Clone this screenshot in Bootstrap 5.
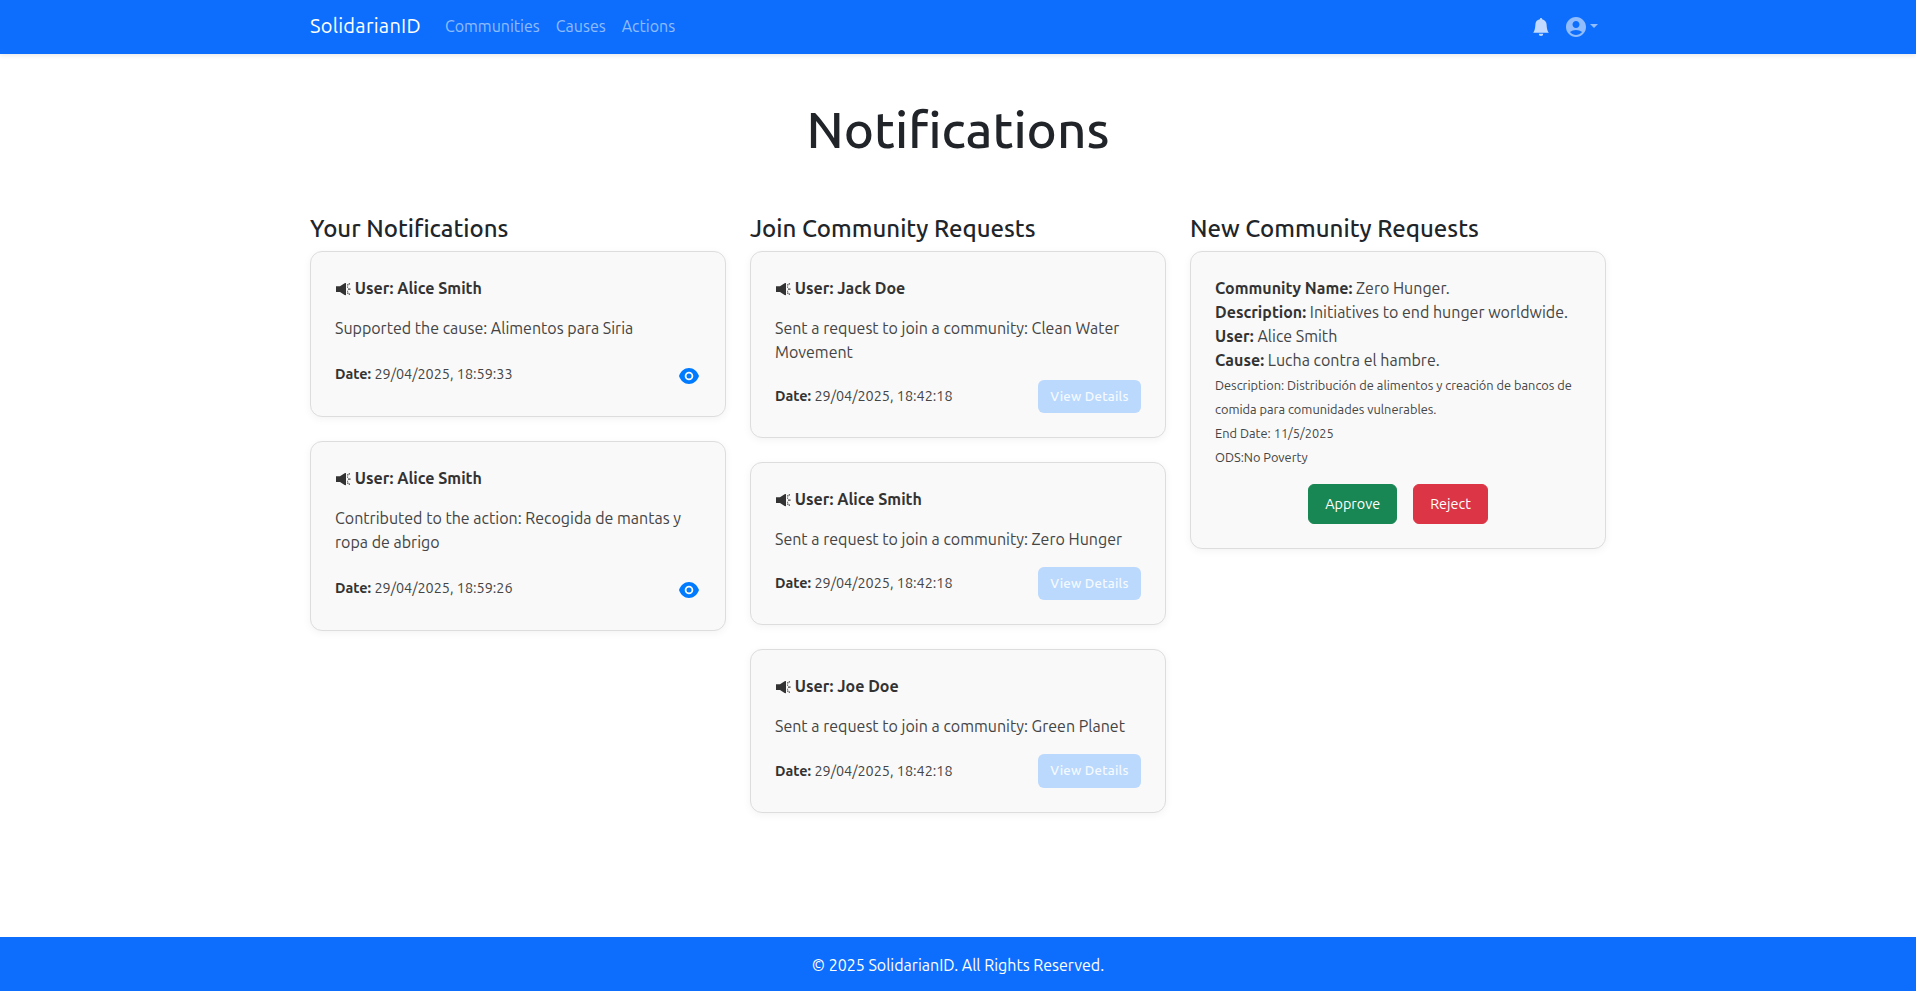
<!DOCTYPE html>
<html lang="en">
<head>
<meta charset="utf-8">
<meta name="viewport" content="width=device-width, initial-scale=1">
<title>SolidarianID - Notifications</title>
<link href="https://cdn.jsdelivr.net/npm/bootstrap@5.3.0/dist/css/bootstrap.min.css" rel="stylesheet">
<style>
body { font-family: Ubuntu, "Noto Sans", "Liberation Sans", sans-serif; }
.navbar { height: 54px; box-shadow: 0 2px 4px rgba(0,0,0,.08); }
.navbar .navbar-brand { letter-spacing: .27px; }
.navbar .navbar-brand, .navbar .text-links { margin-bottom: 2px; }
.navbar .nav-link { color: rgba(255,255,255,.55); }
.navbar .bell-link { color: rgba(255,255,255,.75); }
.navbar .dropdown-toggle::after { margin-bottom: 3px; }
.page-title { font-size: 51.2px; line-height: 1.2; padding-top: 45px; margin-bottom: 54.4px; }
.section-title { font-size: 24px; line-height: 28.8px; margin-bottom: 7.4px; }
.notice { background: #f9f9f9; border: 1px solid #ddd; border-radius: 12px; padding: 24px; margin-bottom: 24px; box-shadow: 0 2px 8px rgba(0,0,0,.05); color: #444; }
.notice strong { color: #333; font-weight: 700; }
.notice p { margin-bottom: 16px; }
.horn { margin: -2px 0 0 1px; }
.stamp { font-size: 14.4px; }
.eye-row { height: 37px; margin-bottom: -1px; }
.eye-row svg { color: #007bff; margin: 3px 2px 0 0; }
.button-row .stamp { padding-top: 1px; }
.notice .view-btn { width: 103px; height: 33.2px; padding: 0; border: 0; border-radius: 6px; background: #bad9fc; color: #f6faff; opacity: 1; font-size: 13.2px; font-weight: 500; letter-spacing: .25px; line-height: 33.2px; }
.fine { font-size: 12.8px; line-height: 24px; }
.fine-block { padding-top: 1px; margin-bottom: -1px; }
.decide { height: 40px; font-size: 14.4px; border-radius: 6px; padding: 7px 0 5px; }
.foot { height: 54px; padding-top: 1px; }
</style>
</head>
<body class="d-flex flex-column min-vh-100">
<svg class="d-none" xmlns="http://www.w3.org/2000/svg">
  <symbol id="horn" viewBox="0 0 15 14"><path d="M0 4.300H4L8.600 1.300 10 1v12.200L8.600 12.900 4 10H0z" fill="#333"/><path d="M11.100 2.900h1.300M12.700 1.900h1.300M11.100 5.100h1M12 7.100h2.600M11.100 9.300h1M11.100 11.100h1.300M12.700 12.100h1.300" stroke="#444" stroke-width="1.100"/></symbol>
  <symbol id="eye" viewBox="0 0 20 16"><path fill="currentColor" fill-rule="evenodd" d="M10 0C5.500 0 1.700 3.200 0 8c1.700 4.800 5.500 8 10 8s8.300-3.200 10-8c-1.700-4.800-5.500-8-10-8zm0 3.700a4.300 4.300 0 1 1 0 8.600 4.300 4.300 0 0 1 0-8.600zm0 1.800a2.500 2.500 0 1 0 0 5 2.500 2.500 0 0 0 0-5z"/></symbol>
</svg>
<nav class="navbar navbar-expand navbar-dark bg-primary py-0">
  <div class="container">
    <a class="navbar-brand py-0" href="#">SolidarianID</a>
    <ul class="navbar-nav text-links me-auto">
      <li class="nav-item"><a class="nav-link" href="#">Communities</a></li>
      <li class="nav-item"><a class="nav-link" href="#">Causes</a></li>
      <li class="nav-item"><a class="nav-link" href="#">Actions</a></li>
    </ul>
    <ul class="navbar-nav align-items-center">
      <li class="nav-item"><a class="nav-link bell-link d-flex" href="#" aria-label="Notifications"><svg width="18" height="18" viewBox="0 0 16 16" fill="currentColor"><path d="M8 16a2 2 0 0 0 2-2H6a2 2 0 0 0 2 2m.995-14.901a1 1 0 1 0-1.990 0A5 5 0 0 0 3 6c0 1.098-.5 6-2 7h14c-1.500-1-2-5.902-2-7 0-2.420-1.720-4.440-4.005-4.901"/></svg></a></li>
      <li class="nav-item"><a class="nav-link dropdown-toggle d-flex align-items-center" href="#" aria-label="Account"><svg width="20" height="20" viewBox="2 2 20 20" fill="currentColor"><path d="M12 2C6.480 2 2 6.480 2 12s4.480 10 10 10 10-4.480 10-10S17.520 2 12 2m0 4c1.930 0 3.500 1.570 3.500 3.500S13.930 13 12 13s-3.500-1.570-3.500-3.500S10.070 6 12 6m0 14c-2.030 0-4.430-.820-6.140-2.880a9.950 9.950 0 0 1 12.280 0C16.430 19.180 14.030 20 12 20"/></svg></a></li>
    </ul>
  </div>
</nav>
<main class="container flex-grow-1">
  <h1 class="page-title text-center">Notifications</h1>
  <div class="row">
    <section class="col-4">
      <h2 class="section-title">Your Notifications</h2>
      <article class="notice">
        <p><svg class="horn" width="15" height="14"><use href="#horn"/></svg> <strong>User: Alice Smith</strong></p>
        <p>Supported the cause: Alimentos para Siria</p>
        <div class="eye-row d-flex justify-content-between align-items-center"><span class="stamp"><strong>Date:</strong> 29/04/2025, 18:59:33</span><svg width="20" height="16"><use href="#eye"/></svg></div>
      </article>
      <article class="notice">
        <p><svg class="horn" width="15" height="14"><use href="#horn"/></svg> <strong>User: Alice Smith</strong></p>
        <p>Contributed to the action: Recogida de mantas y ropa de abrigo</p>
        <div class="eye-row d-flex justify-content-between align-items-center"><span class="stamp"><strong>Date:</strong> 29/04/2025, 18:59:26</span><svg width="20" height="16"><use href="#eye"/></svg></div>
      </article>
    </section>
    <section class="col-4">
      <h2 class="section-title">Join Community Requests</h2>
      <article class="notice">
        <p><svg class="horn" width="15" height="14"><use href="#horn"/></svg> <strong>User: Jack Doe</strong></p>
        <p>Sent a request to join a community: Clean Water Movement</p>
        <div class="button-row d-flex justify-content-between align-items-center"><span class="stamp"><strong>Date:</strong> 29/04/2025, 18:42:18</span><button class="btn view-btn" disabled>View Details</button></div>
      </article>
      <article class="notice">
        <p><svg class="horn" width="15" height="14"><use href="#horn"/></svg> <strong>User: Alice Smith</strong></p>
        <p>Sent a request to join a community: Zero Hunger</p>
        <div class="button-row d-flex justify-content-between align-items-center"><span class="stamp"><strong>Date:</strong> 29/04/2025, 18:42:18</span><button class="btn view-btn" disabled>View Details</button></div>
      </article>
      <article class="notice">
        <p><svg class="horn" width="15" height="14"><use href="#horn"/></svg> <strong>User: Joe Doe</strong></p>
        <p>Sent a request to join a community: Green Planet</p>
        <div class="button-row d-flex justify-content-between align-items-center"><span class="stamp"><strong>Date:</strong> 29/04/2025, 18:42:18</span><button class="btn view-btn" disabled>View Details</button></div>
      </article>
    </section>
    <section class="col-4">
      <h2 class="section-title">New Community Requests</h2>
      <article class="notice">
        <div><strong>Community Name:</strong> Zero Hunger.</div>
        <div><strong>Description:</strong> Initiatives to end hunger worldwide.</div>
        <div><strong>User:</strong> Alice Smith</div>
        <div><strong>Cause:</strong> Lucha contra el hambre.</div>
        <div class="fine-block">
          <div class="fine">Description: Distribución de alimentos y creación de bancos de comida para comunidades vulnerables.</div>
          <div class="fine">End Date: 11/5/2025</div>
          <div class="fine">ODS:No Poverty</div>
        </div>
        <div class="d-flex justify-content-center gap-3 mt-3"><button class="btn btn-success decide px-3">Approve</button><button class="btn btn-danger decide px-3">Reject</button></div>
      </article>
    </section>
  </div>
</main>
<footer class="foot bg-primary text-white d-flex align-items-center justify-content-center">© 2025 SolidarianID. All Rights Reserved.</footer>
<script src="https://cdn.jsdelivr.net/npm/bootstrap@5.3.0/dist/js/bootstrap.bundle.min.js"></script>
</body>
</html>
